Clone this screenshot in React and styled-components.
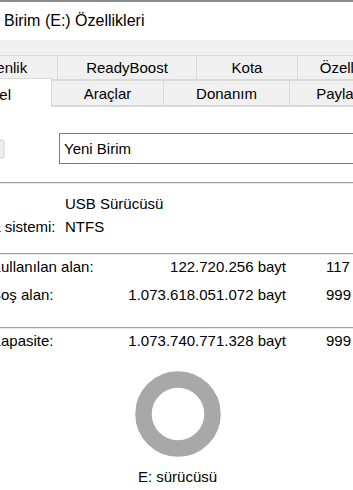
import React from 'react'
import styled, { createGlobalStyle } from 'styled-components'

const GlobalStyle = createGlobalStyle`
  html, body {
    margin: 0;
    padding: 0;
    background: #ffffff;
    overflow: hidden;
  }
  body {
    font-family: "Liberation Sans", Arial, sans-serif;
    color: #000000;
  }
`

const topTabs = [
  { label: 'Güvenlik', width: 120 },
  { label: 'ReadyBoost', width: 140 },
  { label: 'Kota', width: 102 },
  { label: 'Özelleştir', width: 108 },
]

const bottomTabs = [
  { label: 'Genel', width: 122, selected: true },
  { label: 'Araçlar', width: 113 },
  { label: 'Donanım', width: 127 },
  { label: 'Paylaşım', width: 116 },
]

const infoRows = [
  { label: 'Tür:', value: 'USB Sürücüsü' },
  { label: 'Dosya sistemi:', value: 'NTFS' },
]

const spaceRows = [
  { label: 'Kullanılan alan:', bytes: '122.720.256 bayt', size: '117 MB', swatch: '#2a6fdb' },
  { label: 'Boş alan:', bytes: '1.073.618.051.072 bayt', size: '999 GB', swatch: '#c838c8' },
]

const Viewport = styled.div`
  width: 353px;
  height: 490px;
  overflow: hidden;
  background: #f0f0f0;
`

const Window = styled.div`
  width: 480px;
  height: 100%;
  margin-left: -72px;
  display: flex;
  flex-direction: column;
  border-top: 2px solid #8c8c8c;
  box-sizing: border-box;
`

const TitleBar = styled.div`
  height: 38px;
  flex: none;
  display: flex;
  align-items: center;
  padding-left: 41px;
  background: #ffffff;
  font-size: 16px;
  color: #000000;
`

const Body = styled.div`
  flex: 1;
  display: flex;
  flex-direction: column;
  padding-top: 15px;
  background: #f0f0f0;
`

const TabRow = styled.div`
  display: flex;
  height: ${(p) => p.$height}px;
  margin-left: ${(p) => p.$offset}px;
  flex: none;
`

const Tab = styled.div`
  width: ${(p) => p.$width}px;
  flex: none;
  box-sizing: border-box;
  display: flex;
  align-items: center;
  justify-content: center;
  font-size: 15px;
  background: ${(p) => (p.$selected ? '#ffffff' : '#f0f0f0')};
  border: 1px solid #d9d9d9;
  border-bottom: ${(p) => (p.$selected ? 'none' : '1px solid #d9d9d9')};
  margin-left: -1px;
  margin-top: ${(p) => (p.$selected ? -2 : 0)}px;
  margin-bottom: ${(p) => (p.$selected ? -1 : 0)}px;
  z-index: ${(p) => (p.$selected ? 2 : 1)};
  padding-top: ${(p) => (p.$selected ? 2 : 0)}px;
  white-space: nowrap;
`

const Panel = styled.div`
  flex: 1;
  background: #ffffff;
  border-top: 1px solid #d9d9d9;
  border-left: 1px solid #d9d9d9;
  margin-left: 2px;
  display: flex;
  flex-direction: column;
  position: relative;
  z-index: 1;
`

const NameRow = styled.div`
  display: flex;
  align-items: center;
  gap: 53px;
  padding-left: 27px;
  margin-top: 25px;
`

const DriveIcon = styled.svg`
  flex: none;
`

const NameField = styled.div`
  width: 320px;
  height: 31px;
  box-sizing: border-box;
  border: 1px solid #7a7a7a;
  display: flex;
  align-items: center;
  padding-left: 4px;
  font-size: 15px;
  background: #ffffff;
`

const Separator = styled.div`
  height: 1px;
  background: #a0a0a0;
  border-bottom: 1px solid #e8e8e8;
  margin: ${(p) => p.$top}px 0 0 25px;
  flex: none;
`

const InfoGrid = styled.div`
  display: grid;
  grid-template-columns: 107px 1fr;
  grid-auto-rows: 23px;
  align-items: center;
  padding-left: 27px;
  margin-top: 8px;
  font-size: 15px;
`

const SpaceGrid = styled.div`
  display: grid;
  grid-template-columns: 35px 130px 165px 40px auto;
  grid-auto-rows: 22px;
  row-gap: ${(p) => p.$gap || 0}px;
  align-items: center;
  padding-left: 25px;
  margin-top: ${(p) => p.$top}px;
  font-size: 15px;
  white-space: nowrap;
`

const Swatch = styled.span`
  width: 14px;
  height: 14px;
  background: ${(p) => p.$color || 'transparent'};
  border: ${(p) => (p.$color ? '1px solid #555' : 'none')};
  box-sizing: border-box;
`

const Bytes = styled.span`
  text-align: right;
`

const Size = styled.span`
  grid-column: 5;
`

const ChartArea = styled.div`
  display: flex;
  flex-direction: column;
  align-items: center;
  padding-left: 16px;
  margin-top: 20px;
`

const Caption = styled.div`
  font-size: 15px;
  line-height: 22px;
  margin-top: 9px;
`

export default function App() {
  return (
    <>
      <GlobalStyle />
      <Viewport>
        <Window>
          <TitleBar>Yeni Birim (E:) Özellikleri</TitleBar>
          <Body>
            <TabRow $height={25} $offset={11}>
              {topTabs.map((t) => (
                <Tab key={t.label} $width={t.width}>
                  {t.label}
                </Tab>
              ))}
            </TabRow>
            <TabRow $height={26} $offset={3}>
              {bottomTabs.map((t) => (
                <Tab key={t.label} $width={t.width} $selected={t.selected}>
                  {t.label}
                </Tab>
              ))}
            </TabRow>
            <Panel>
              <NameRow>
                <DriveIcon width="48" height="32" viewBox="0 0 48 32">
                  <rect x="2" y="8" width="44" height="18" rx="2" fill="#eeeeee" stroke="#d0d0d0" />
                  <rect x="36" y="15" width="6" height="3" fill="#6cc04a" />
                </DriveIcon>
                <NameField>Yeni Birim</NameField>
              </NameRow>
              <Separator $top={18} />
              <InfoGrid>
                {infoRows.map((r) => (
                  <React.Fragment key={r.label}>
                    <span>{r.label}</span>
                    <span>{r.value}</span>
                  </React.Fragment>
                ))}
              </InfoGrid>
              <Separator $top={15} />
              <SpaceGrid $top={0} $gap={6}>
                {spaceRows.map((r) => (
                  <React.Fragment key={r.label}>
                    <Swatch $color={r.swatch} />
                    <span>{r.label}</span>
                    <Bytes>{r.bytes}</Bytes>
                    <Size>{r.size}</Size>
                  </React.Fragment>
                ))}
              </SpaceGrid>
              <Separator $top={22} />
              <SpaceGrid $top={0}>
                <Swatch />
                <span>Kapasite:</span>
                <Bytes>1.073.740.771.328 bayt</Bytes>
                <Size>999 GB</Size>
              </SpaceGrid>
              <ChartArea>
                <svg width="86" height="86" viewBox="0 0 86 86">
                  <circle cx="43" cy="43" r="34.5" fill="none" stroke="#a8a8a8" strokeWidth="16.5" />
                </svg>
                <Caption>E: sürücüsü</Caption>
              </ChartArea>
            </Panel>
          </Body>
        </Window>
      </Viewport>
    </>
  )
}
